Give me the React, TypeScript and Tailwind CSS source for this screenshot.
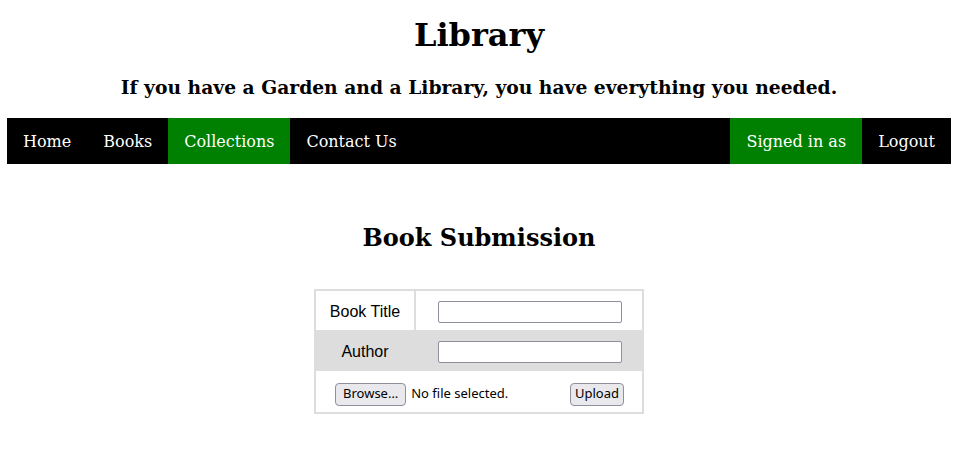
import React from "react";

export default function App() {
  const serif = { fontFamily: '"DejaVu Serif", serif' };
  return (
    <div className="bg-white w-[955px] h-[456px] overflow-hidden" style={serif}>
      <div className="ml-[7px] w-[944px]">
        <h1 className="text-center text-[32px] font-bold leading-[37px] pt-[17px] text-black">Library</h1>
        <h3 className="text-center text-[18.72px] font-bold leading-[22px] mt-[22px] text-black">
          If you have a Garden and a Library, you have everything you needed.
        </h3>
        <nav className="mt-[20px] w-[944px] h-[46px] bg-black flex text-[16px] text-white">
          <a className="px-[16px] pt-[2px] flex items-center">Home</a>
          <a className="px-[16px] pt-[2px] flex items-center">Books</a>
          <a className="px-[16px] pt-[2px] flex items-center bg-[#008000]">Collections</a>
          <a className="px-[16px] pt-[2px] flex items-center">Contact Us</a>
          <div className="flex-1" />
          <a className="px-[16px] pt-[2px] flex items-center bg-[#008000]">Signed in as</a>
          <a className="px-[16px] pt-[2px] flex items-center">Logout</a>
        </nav>
        <h2 className="text-center text-[24px] font-bold leading-[28px] mt-[60px] text-black">Book Submission</h2>
        <div className="flex justify-center mt-[37px]">
          <div
            className="w-[330px] border-2 border-[#dddddd] text-[16px] text-black"
            style={{ fontFamily: '"Liberation Sans", Arial, sans-serif' }}
          >
            <div className="flex h-[39px]">
              <div className="w-[100px] pt-[2px] border-r-2 border-[#dddddd] flex items-center justify-center">Book Title</div>
              <div className="flex-1 pt-[2px] flex items-center pl-[22px]">
                <div className="w-[184px] h-[22px] border border-[#8f8f9d] rounded-[2px] bg-white" />
              </div>
            </div>
            <div className="flex h-[41px] bg-[#dddddd]">
              <div className="w-[100px] pt-[2px] flex items-center justify-center pr-[2px]">Author</div>
              <div className="flex-1 pt-[2px] flex items-center pl-[22px]">
                <div className="w-[184px] h-[22px] border border-[#8f8f9d] rounded-[2px] bg-white" />
              </div>
            </div>
            <div
              className="flex h-[41px] items-center pt-[5px] pl-[19px] pr-[18px] text-[13px]"
              style={{ fontFamily: '"Noto Sans", sans-serif' }}
            >
              <span className="h-[23px] px-[7px] flex items-center border border-[#8f8f9d] rounded-[4px] bg-[#e9e9ed]">Browse…</span>
              <span className="ml-[5px]">No file selected.</span>
              <div className="flex-1" />
              <span className="h-[23px] px-[4px] flex items-center border border-[#8f8f9d] rounded-[4px] bg-[#e9e9ed]">Upload</span>
            </div>
          </div>
        </div>
      </div>
    </div>
  );
}
